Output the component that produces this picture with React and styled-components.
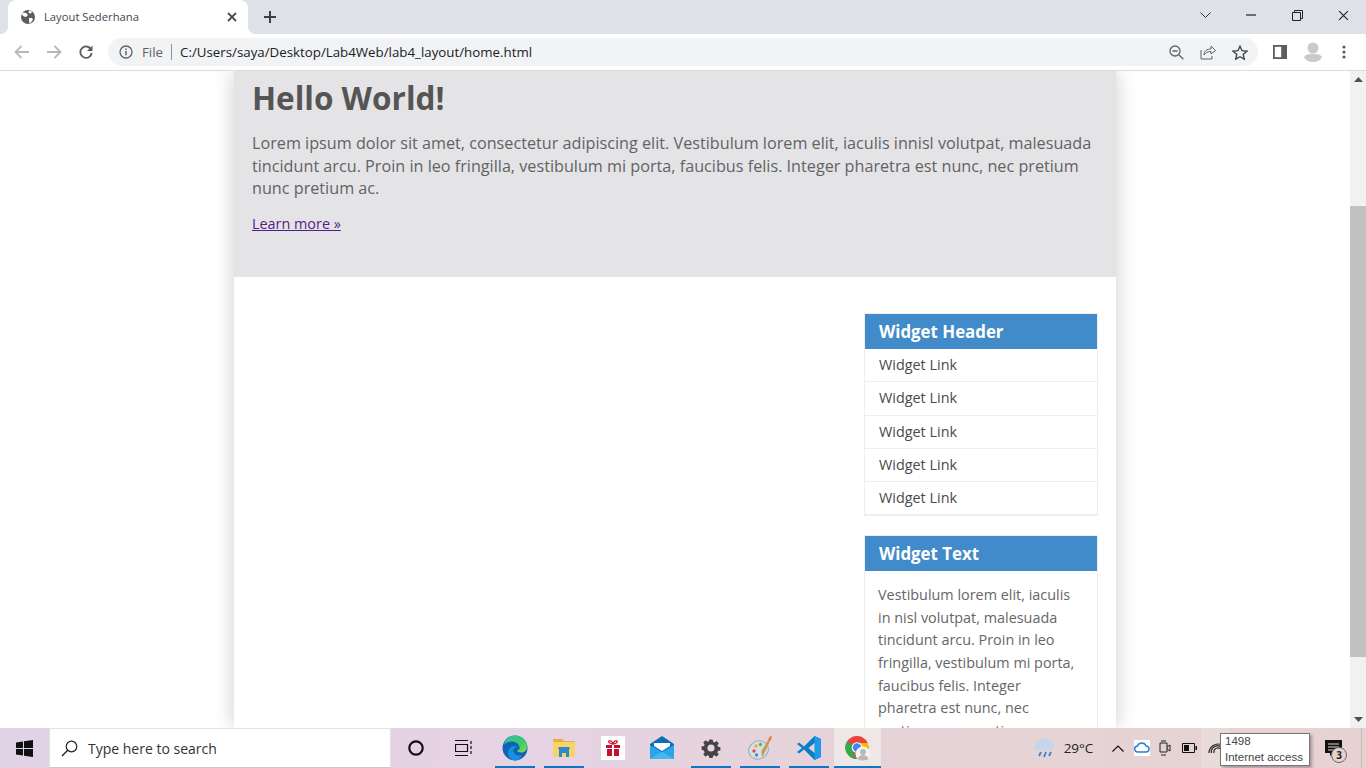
import React from 'react';
import styled, { createGlobalStyle } from 'styled-components';

const Global = createGlobalStyle`
  html, body { margin: 0; padding: 0; height: 100%; overflow: hidden; }
  body { font-family: "Open Sans", sans-serif; background: #fff; }
  * { box-sizing: border-box; }
`;
const Screen = styled.div`width:1366px;height:768px;display:flex;flex-direction:column;overflow:hidden;position:relative;`;
const TabStrip = styled.div`height:34px;background:#dee1e6;display:flex;align-items:flex-end;padding-left:8px;flex:none;`;
const Tab = styled.div`width:240px;height:34px;background:#fff;border-radius:8px 8px 0 0;display:flex;align-items:center;padding:0 11px 0 12px;position:relative;
  &::before,&::after{content:"";position:absolute;bottom:0;width:8px;height:8px;}
  &::before{left:-8px;background:radial-gradient(circle at 0 0,transparent 8px,#fff 8.5px);}
  &::after{right:-8px;background:radial-gradient(circle at 100% 0,transparent 8px,#fff 8.5px);}`;
const TabTitle = styled.span`font:11.25px "Open Sans",sans-serif;color:#45474a;margin-left:8px;padding-bottom:2px;flex:1;`;
const NewTab = styled.div`width:26px;height:26px;margin-left:9px;margin-bottom:4px;display:flex;align-items:center;justify-content:center;`;
const WinControls = styled.div`margin-left:auto;display:flex;align-self:flex-start;height:30px;align-items:center;`;
const WinBtn = styled.div`width:46px;height:30px;display:flex;align-items:center;justify-content:center;`;
const Toolbar = styled.div`height:37px;flex:none;background:#fff;border-bottom:1px solid #d9dadc;display:flex;align-items:center;padding:0 0 0 6px;`;
const NavBtn = styled.div`width:32px;height:28px;display:flex;align-items:center;justify-content:center;flex:none;`;
const Omni = styled.div`height:28px;width:1150px;flex:none;margin-left:6px;background:#f1f3f4;border-radius:14px;display:flex;align-items:center;padding:0 2px 0 11px;`;
const FileLabel = styled.span`font:13.3px "Open Sans",sans-serif;color:#5f6368;margin-left:9px;padding-right:8px;border-right:1px solid #8d9094;line-height:16px;`;
const Url = styled.span`font:13.3px "Open Sans",sans-serif;color:#202124;margin-left:8px;flex:1;`;
const OmniBtn = styled.div`width:32px;height:24px;display:flex;align-items:center;justify-content:center;flex:none;`;
const ToolBtn = styled.div`width:${p=>p.$w||33}px;height:28px;display:flex;align-items:center;justify-content:center;flex:none;margin-left:${p=>p.$ml||0}px;`;
const Viewport = styled.div`flex:1;min-height:0;display:flex;background:#fff;`;
const PageArea = styled.div`flex:1;overflow:hidden;display:flex;justify-content:center;`;
const Container = styled.div`width:882px;height:100%;background:#fff;box-shadow:0 0 20px rgba(0,0,0,.2);overflow:hidden;flex:none;`;
const Hero = styled.div`height:206px;background:#e4e4e7;padding:7px 18px 0;color:#555;`;
const H1 = styled.h1`font:700 31.5px/40px "Open Sans",sans-serif;margin:0 0 14px;color:#555;`;
const Lead = styled.p`font:16.2px/22.6px "Open Sans",sans-serif;margin:0 0 12px;color:#626264;`;
const LearnMore = styled.a`font:14.4px/22px "Open Sans",sans-serif;color:#551a8b;text-decoration:underline;`;
const Body = styled.div`display:flex;justify-content:flex-end;padding:36px 18px 0 0;`;
const Sidebar = styled.aside`width:234px;display:flex;flex-direction:column;gap:19px;`;
const Widget = styled.section`border:1px solid #eee;`;
const WidgetHead = styled.h3`margin:0;padding:0 14px;background:#428bca;color:#fff;font:700 16.85px/35px "Open Sans",sans-serif;height:35px;`;
const LinkRow = styled.div`height:33.25px;padding-left:14px;font:14.4px/32px "Open Sans",sans-serif;color:#4a4a4a;border-bottom:1px solid #eee;&:last-child{height:33px;}`;
const WidgetText = styled.p`margin:0;padding:13px 20px 12px 13px;font:14.4px/22.68px "Open Sans",sans-serif;color:#666;`;
const Scrollbar = styled.div`width:16px;background:#f1f1f1;display:flex;flex-direction:column;align-items:center;flex:none;`;
const ArrowBox = styled.div`height:17px;width:16px;display:flex;align-items:center;justify-content:center;flex:none;`;
const ThumbGap = styled.div`height:118px;flex:none;`;
const Thumb = styled.div`width:16px;height:451px;background:#c1c1c1;flex:none;`;
const Spacer = styled.div`flex:1;`;
const Taskbar = styled.div`height:40px;flex:none;display:flex;align-items:center;background:linear-gradient(90deg,#e2d2e5 0%,#e6d3e4 40%,#e5d3d8 62%,#e6d3d1 100%);position:relative;`;
const StartBtn = styled.div`width:49px;height:40px;display:flex;align-items:center;justify-content:center;flex:none;`;
const Search = styled.div`width:342px;height:40px;background:#fff;border:1px solid #e4e0e6;border-bottom-color:#c9c5cc;display:flex;align-items:center;padding-left:11px;flex:none;`;
const SearchText = styled.span`font:14px "Open Sans",sans-serif;color:#333;margin-left:10px;`;
const Slots = styled.div`display:flex;margin-left:1px;`;
const Slot = styled.div`width:48px;height:40px;display:flex;align-items:center;justify-content:center;flex:none;`;
const AppList = styled.div`display:flex;margin-left:2px;`;
const AppSlot = styled.div`width:${p=>p.$w||49}px;height:40px;display:flex;align-items:center;justify-content:center;flex:none;position:relative;
  margin-left:${p=>p.$active?1:0}px;
  background:${p=>p.$active?'#efe6e6':'transparent'};
  ${p=>p.$run?`&::after{content:"";position:absolute;bottom:0;left:${p.$active?0:5}px;right:${p.$active?0:4}px;height:2px;background:#0a78c8;}`:''}`;
const Tray = styled.div`margin-left:auto;display:flex;align-items:center;height:40px;`;
const Temp = styled.span`font:13.5px "Open Sans",sans-serif;color:#222;width:45px;text-align:center;margin:0 3px 0 -3px;`;
const TrayIcon = styled.div`width:${p=>p.$w||24}px;height:40px;display:flex;align-items:center;justify-content:center;flex:none;background:${p=>p.$hover?'rgba(255,255,255,.18)':'transparent'};`;
const Notif = styled.div`width:32px;height:40px;margin-left:88px;margin-right:12px;position:relative;display:flex;align-items:center;justify-content:center;`;
const Badge = styled.span`position:absolute;left:14px;top:19px;width:16px;height:16px;border-radius:50%;border:1px solid #666;background:#e6d3d1;font:700 10px/14px "Open Sans",sans-serif;text-align:center;color:#222;`;
const Peek = styled.div`width:5px;height:40px;border-left:1px solid #c9b8b6;flex:none;`;
const Tooltip = styled.div`position:absolute;left:1220px;top:5px;width:90px;height:33px;background:#fff;border:1px solid #767676;box-shadow:2px 2px 3px rgba(0,0,0,.3);padding:0 0 0 4px;font:11.5px/15.5px "Liberation Sans",sans-serif;color:#444;`;

const grey='#5f6368';
const Globe=()=>(<svg width="16" height="16" viewBox="0 0 16 16"><circle cx="8" cy="8" r="7" fill="#5a5d61"/><path d="M3 3.500l3 .5 2 2-2 2-2-.5-2.500-2zM9 1.500l3 1-1 2-2.500-.5zM9 9h3l1 1.500-2.500 3.500-1 .5-.5-3z" fill="#fff"/></svg>);
const Close=({s=10,c='#4a4c4f',w=1.8})=>(<svg width={s} height={s} viewBox="0 0 10 10"><path d="M1 1l8 8M9 1l-8 8" stroke={c} strokeWidth={w}/></svg>);
const Edge=()=>(<svg width="26" height="26" viewBox="0 0 26 26"><defs><linearGradient id="eg" x1="0" y1="0" x2="1" y2="1"><stop offset="0" stopColor="#35c1a0"/><stop offset=".6" stopColor="#3ccb6c"/><stop offset="1" stopColor="#8fdc4a"/></linearGradient></defs><circle cx="13" cy="13" r="12.500" fill="#0f63b5"/><path d="M2 10C3 4 8 .5 13 .5c6 0 12 4.500 12 11 0 4-3 6-6 6-2 0-4-1-4-2 2 0 3-1.500 2.500-3.500C16.500 8 13 6.500 9.500 6.500 6 6.500 3.500 8 2 10z" fill="url(#eg)"/><path d="M13 25.500c-5 0-8-5-6.500-10C8 11 13 10 15 12.500c-2.500-.5-4 1.500-3.500 4 .5 3 4 5 8.500 3.500-1.500 3-4 5.500-7 5.500z" fill="#1a8fe0"/></svg>);
const Folder=()=>(<svg width="24" height="24" viewBox="0 0 24 24"><path d="M1 3h9l2 2h11v4H1z" fill="#e6b13c"/><path d="M1 6h22v15H1z" fill="#f8d468"/><path d="M7 21v-8h10v8h-3v-4h-4v4z" fill="#2f88c9"/><path d="M6 13l1-2h10l1 2z" fill="#2f88c9"/></svg>);
const Gift=()=>(<svg width="24" height="24" viewBox="0 0 24 24"><rect width="24" height="24" fill="#fff"/><path d="M5 9h14v3H5zM6 13h12v7H6z" fill="#c8102e"/><path d="M11 9h2v11h-2z" fill="#fff"/><path d="M12 8C9 8 7 6 8 5s3 0 4 3zM12 8c3 0 5-2 4-3s-3 0-4 3z" fill="none" stroke="#c8102e" strokeWidth="1.300"/></svg>);
const Mail=()=>(<svg width="26" height="26" viewBox="0 0 26 26"><path d="M1 9L13 1l12 8v15H1z" fill="#0b6fb8"/><path d="M1 10l12 7 12-7v14H1z" fill="#2ba5e8"/><path d="M1 24l12-7 12 7z" fill="#52c0f2" opacity=".7"/><path d="M5 8h16v3l-8 5-8-5z" fill="#fff"/></svg>);
const Gear=()=>(<svg width="20" height="20" viewBox="0 0 20 20"><path d="M8.300 1h3.400l.4 2.500 1.700.7 2-1.500 2.400 2.400-1.500 2 .7 1.700 2.500.4v3.400l-2.500.4-.7 1.700 1.500 2-2.400 2.400-2-1.500-1.700.7-.4 2.500H8.300l-.4-2.500-1.700-.7-2 1.500-2.400-2.400 1.500-2-.7-1.700L.1 11.700V8.300l2.500-.4.700-1.700-1.500-2 2.400-2.400 2 1.500 1.700-.7z" fill="#444" transform="translate(0.500 0.500) scale(.95)"/><circle cx="10" cy="10" r="3.600" fill="#e6d3dc"/></svg>);
const Paint=()=>(<svg width="26" height="26" viewBox="0 0 26 26"><ellipse cx="11.500" cy="15" rx="10" ry="9" fill="#d8dfe6" stroke="#9aa9b5" transform="rotate(-25 11.500 15)"/><circle cx="7" cy="16" r="1.700" fill="#d94f4f"/><circle cx="9" cy="11" r="1.700" fill="#e9b13c"/><circle cx="13.500" cy="9.500" r="1.700" fill="#56b35a"/><circle cx="9.500" cy="20" r="1.700" fill="#4a8ed0"/><path d="M23.500 1l1.500 1-7 15-3 6-.5-7z" fill="#c99a55"/><path d="M23 1l2 1-2 4-2-1z" fill="#e2853a"/></svg>);
const Code=()=>(<svg width="26" height="26" viewBox="0 0 26 26"><path d="M18.500 1L25 4v18l-6.500 3L8 14.500l-5 4L1 17l5-4-5-4 2-1.500 5 4z" fill="#0a7dc9"/><path d="M18.500 1L25 4v18l-6.500 3z" fill="#1e9be8"/><path d="M18.500 8l-6 5 6 5z" fill="#e6d3d8"/></svg>);
const Chrome=()=>(<svg width="26" height="27" viewBox="0 0 26 27"><circle cx="12" cy="12.500" r="11.500" fill="#e8453c"/><path d="M12 12.500L2 18.500A11.500 11.500 0 0 1 2 6.500z M2 6.500 l5 9 5 8.500A11.500 11.500 0 0 1 2 18z" fill="#34a853"/><path d="M12 24a11.500 11.500 0 0 0 10.500-16H12z" fill="#fbbc05"/><circle cx="12" cy="12.500" r="5.300" fill="#fff"/><circle cx="12" cy="12.500" r="4.200" fill="#4285f4"/><circle cx="18" cy="19" r="7.500" fill="#f3f3f3"/><circle cx="18" cy="17" r="3" fill="#b9b9b9"/><path d="M12.500 24c1-3 3-4 5.500-4s4.500 1 5.500 4c-3 2-8 2-11 0z" fill="#b9b9b9"/></svg>);

export default function App(){
  return (<Screen><Global/>
    <TabStrip>
      <Tab><Globe/><TabTitle>Layout Sederhana</TabTitle><Close/></Tab>
      <NewTab><svg width="12" height="12" viewBox="0 0 12 12"><path d="M6 0v12M0 6h12" stroke="#3c4043" strokeWidth="2"/></svg></NewTab>
      <WinControls>
        <WinBtn><svg width="11" height="7" viewBox="0 0 11 7"><path d="M.5 .5l5 5 5-5" stroke="#333" fill="none"/></svg></WinBtn>
        <WinBtn><svg width="10" height="2" viewBox="0 0 10 2"><path d="M0 1h10" stroke="#222" strokeWidth="1.200"/></svg></WinBtn>
        <WinBtn><svg width="11" height="11" viewBox="0 0 11 11"><path d="M.5 2.500h8v8h-8zM2.500 2.500v-2h8v8h-2" stroke="#222" fill="none"/></svg></WinBtn>
        <WinBtn><Close s={11} c="#222" w={1}/></WinBtn>
      </WinControls>
    </TabStrip>
    <Toolbar>
      <NavBtn><svg width="16" height="14" viewBox="0 0 16 14"><path d="M15 7H2M7.500 1L1.500 7l6 6" stroke="#b6b8bb" strokeWidth="1.800" fill="none"/></svg></NavBtn>
      <NavBtn><svg width="16" height="14" viewBox="0 0 16 14"><path d="M1 7h13M8.500 1l6 6-6 6" stroke="#b6b8bb" strokeWidth="1.800" fill="none"/></svg></NavBtn>
      <NavBtn><svg width="14" height="14" viewBox="0 0 14 14"><path d="M12 4.300A5.700 5.700 0 1 0 12.700 8" stroke="#5a5d61" strokeWidth="1.800" fill="none"/><path d="M13.500 .5v5.500H8z" fill="#5a5d61"/></svg></NavBtn>
      <Omni>
        <svg width="14" height="14" viewBox="0 0 14 14"><circle cx="7" cy="7" r="6" stroke={grey} strokeWidth="1.300" fill="none"/><path d="M7 6v4.200M7 3.500v1.500" stroke={grey} strokeWidth="1.500"/></svg>
        <FileLabel>File</FileLabel><Url>C:/Users/saya/Desktop/Lab4Web/lab4_layout/home.html</Url>
        <OmniBtn><svg width="15" height="15" viewBox="0 0 15 15"><circle cx="6" cy="6" r="5" stroke={grey} strokeWidth="1.300" fill="none"/><path d="M3.500 6h5M9.800 9.800l4.500 4.500" stroke={grey} strokeWidth="1.300"/></svg></OmniBtn>
        <OmniBtn><svg width="16" height="16" viewBox="0 0 16 16"><path d="M1 6v9h11v-3" stroke={grey} fill="none"/><path d="M4 11c0-4 3-6 7-6V2l4.500 4.500L11 10V7.500C8 7.500 5.500 8.500 4 11z" stroke={grey} fill="none"/></svg></OmniBtn>
        <OmniBtn><svg width="16" height="15" viewBox="0 0 16 15"><path d="M8 1.200l2 4.500 4.900.5-3.700 3.200 1.100 4.800L8 11.700l-4.300 2.500 1.100-4.800L1.100 6.200 6 5.700z" stroke="#44474a" strokeWidth="1.400" fill="none"/></svg></OmniBtn>
      </Omni>
      <ToolBtn $ml={5}><svg width="14" height="14" viewBox="0 0 14 14"><path d="M0 0h14v14H0z" fill="#5a5d61"/><path d="M1.800 1.800h6.400v10.400H1.800z" fill="#fff"/></svg></ToolBtn>
      <ToolBtn><svg width="18" height="20" viewBox="0 0 18 20"><circle cx="9" cy="6" r="5.500" fill="#c8cacc"/><path d="M0 15c2-3 5-3 9-3s7 0 9 3c-1 3-5 5-9 5s-8-2-9-5z" fill="#c8cacc"/></svg></ToolBtn>
      <ToolBtn $w={30}><svg width="4" height="14" viewBox="0 0 4 14"><circle cx="2" cy="2" r="1.600" fill="#5a5d61"/><circle cx="2" cy="7" r="1.600" fill="#5a5d61"/><circle cx="2" cy="12" r="1.600" fill="#5a5d61"/></svg></ToolBtn>
    </Toolbar>
    <Viewport>
      <PageArea><Container>
        <Hero><H1>Hello World!</H1>
          <Lead>Lorem ipsum dolor sit amet, consectetur adipiscing elit. Vestibulum lorem elit, iaculis innisl volutpat, malesuada tincidunt arcu. Proin in leo fringilla, vestibulum mi porta, faucibus felis. Integer pharetra est nunc, nec pretium nunc pretium ac.</Lead>
          <LearnMore href="#">Learn more »</LearnMore></Hero>
        <Body><Sidebar>
          <Widget><WidgetHead>Widget Header</WidgetHead>{[0,1,2,3,4].map(i=><LinkRow key={i}>Widget Link</LinkRow>)}</Widget>
          <Widget><WidgetHead>Widget Text</WidgetHead><WidgetText>Vestibulum lorem elit, iaculis in nisl volutpat, malesuada tincidunt arcu. Proin in leo fringilla, vestibulum mi porta, faucibus felis. Integer pharetra est nunc, nec pretium nunc pretium ac.</WidgetText></Widget>
        </Sidebar></Body>
      </Container></PageArea>
      <Scrollbar>
        <ArrowBox><svg width="9" height="5" viewBox="0 0 9 5"><path d="M4.500 0L9 5H0z" fill="#505050"/></svg></ArrowBox>
        <ThumbGap/><Thumb/><Spacer/>
        <ArrowBox><svg width="9" height="5" viewBox="0 0 9 5"><path d="M4.500 5L9 0H0z" fill="#505050"/></svg></ArrowBox>
      </Scrollbar>
    </Viewport>
    <Taskbar>
      <StartBtn><svg width="17" height="17" viewBox="0 0 17 17"><path d="M0 2.500l7-1v6.500H0zM8 1.300L17 0v8H8zM0 9h7v6.500l-7-1zM8 9h9v8l-9-1.300z" fill="#111"/></svg></StartBtn>
      <Search><svg width="17" height="17" viewBox="0 0 17 17"><circle cx="10.500" cy="6.500" r="5.300" stroke="#222" strokeWidth="1.200" fill="none"/><path d="M6.700 10.300L1 16" stroke="#222" strokeWidth="1.400"/></svg><SearchText>Type here to search</SearchText></Search>
      <Slots>
        <Slot><svg width="16" height="16" viewBox="0 0 16 16"><circle cx="8" cy="8" r="6.700" stroke="#111" strokeWidth="2.200" fill="none"/></svg></Slot>
        <Slot><svg width="18" height="16" viewBox="0 0 18 16"><path d="M0 .5h13M0 15.500h13M.5 4.500h12v7H.5zM16 1v3M16 6v3M16 11v3" stroke="#111" strokeWidth="1.200" fill="none"/></svg></Slot>
      </Slots>
      <AppList>
        <AppSlot $run><Edge/></AppSlot>
        <AppSlot $run><Folder/></AppSlot>
        <AppSlot><Gift/></AppSlot>
        <AppSlot><Mail/></AppSlot>
        <AppSlot $run><Gear/></AppSlot>
        <AppSlot $run><Paint/></AppSlot>
        <AppSlot $run><Code/></AppSlot>
        <AppSlot $run $active $w={47}><Chrome/></AppSlot>
      </AppList>
      <Tray>
        <TrayIcon $w={28}><svg width="24" height="22" viewBox="0 0 24 22"><path d="M5 13a4 4 0 0 1 1-8 6 6 0 0 1 11-1 5 5 0 0 1 2 9z" fill="#c3d6ea"/><path d="M8 15l-2 4M13 15l-2 5M18 15l-2 4" stroke="#3d85c6" strokeWidth="1.800"/></svg></TrayIcon>
        <Temp>29°C</Temp>
        <TrayIcon $w={28}><svg width="12" height="7" viewBox="0 0 12 7"><path d="M.5 6.500L6 1l5.500 5.500" stroke="#111" strokeWidth="1.200" fill="none"/></svg></TrayIcon>
        <TrayIcon $w={20}><svg width="16" height="16" viewBox="0 0 16 16"><rect width="16" height="16" fill="#fff"/><path d="M4 12a3 3 0 0 1-.5-6 4.500 4.500 0 0 1 8.500 0 3 3 0 0 1 0 6z" stroke="#2a7fd5" strokeWidth="1.400" fill="none"/></svg></TrayIcon>
        <TrayIcon $w={26}><svg width="14" height="16" viewBox="0 0 14 16"><path d="M2 3h7v9H2zM9 7l3-2v6l-3-2" stroke="#222" fill="none"/><path d="M3 1h5M3 15h5" stroke="#222"/></svg></TrayIcon>
        <TrayIcon $w={23}><svg width="15" height="10" viewBox="0 0 15 10"><path d="M.5 .5h12v9H.5z" stroke="#111" fill="none"/><path d="M2 2h5v6H2zM13.500 3h1.500v4h-1.500z" fill="#111"/></svg></TrayIcon>
        <TrayIcon $w={28} $hover><svg width="15" height="12" viewBox="0 0 15 12"><path d="M1 11A9 9 0 0 1 14 3M3.500 11A6 6 0 0 1 14 6M6 11a3 3 0 0 1 8-2" stroke="#222" strokeWidth="1.200" fill="none"/></svg></TrayIcon>
        <Notif><svg width="17" height="17" viewBox="0 0 17 17"><path d="M0 0h17v13H8l-3 3v-3H0z" fill="#111"/><path d="M3 4h11M3 7h11M3 10h7" stroke="#e6d3d1"/></svg><Badge>3</Badge></Notif>
        <Peek/>
      </Tray>
      <Tooltip>1498<br/>Internet access</Tooltip>
    </Taskbar>
  </Screen>);
}
